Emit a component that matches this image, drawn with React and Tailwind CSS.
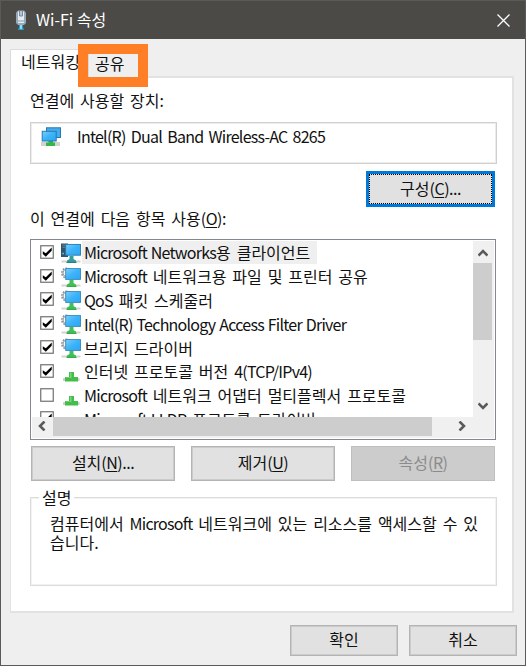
const CheckBox = ({ checked }) => (
  <svg className="mb-[2px] block h-[14px] w-[14px] shrink-0" viewBox="0 0 14 14">
    <rect x="0.75" y="0.75" width="12.5" height="12.5" fill="#fff" stroke="#707070" strokeWidth="1.2" />
    {checked && <path d="M2.8 6.2v2.8l3 2.7 5.9-6V2.6L5.8 8.3z" fill="#000" />}
  </svg>
);

const Stand = ({ blue }) => (
  <g>
    <path d="M0.5 17.500h19v2h-19z" fill="#d2d2d2" />
    <path d="M8.500 13h4v3l2.500 1.500V20h-9v-2.500L8.500 16z" fill={blue ? '#35a09a' : '#42bf58'} />
    <path d="M5.5 18.7h10V20h-10z" fill={blue ? '#287f93' : '#33b045'} />
  </g>
);

const Gradient = ({ id }) => (
  <defs>
    <linearGradient id={id} x1="0" y1="0" x2="1" y2="1">
      <stop offset="0" stopColor="#7ccdfb" />
      <stop offset="0.5" stopColor="#3bb3fa" />
      <stop offset="1" stopColor="#30a4f0" />
    </linearGradient>
  </defs>
);

const ClientIcon = () => (
  <svg className="block h-5 w-5" viewBox="0 0 20 20">
    <Gradient id="client" />
    <path d="M0 0.5h7V14H0z" fill="#34546b" />
    <path d="M1.3 2.2h3M1.3 4.3h3" stroke="#7796a8" strokeWidth="0.8" />
    <path d="M1.3 10.5h1.6" stroke="#55d4ea" strokeWidth="1.3" />
    <Stand blue />
    <rect x="4.7" y="1.4" width="14.8" height="10.8" fill="url(#client)" stroke="#2379ad" strokeWidth="0.9" />
  </svg>
);

const ServiceIcon = ({ id }) => (
  <svg className="block h-5 w-5" viewBox="0 0 20 20">
    <Gradient id={id} />
    <circle cx="5.6" cy="6" r="4.8" fill="#e6e8ea" stroke="#8d9499" strokeWidth="1.6" strokeDasharray="1.7 1.3" />
    <circle cx="5.6" cy="6" r="3.6" fill="#f7f7f7" stroke="#9aa1a6" strokeWidth="1" />
    <Stand />
    <rect x="4.7" y="1.600" width="14.8" height="10.800" fill={`url(#${id})`} stroke="#318abd" strokeWidth="0.9" />
  </svg>
);

const ProtocolIcon = () => (
  <svg className="block h-5 w-5" viewBox="0 0 20 20">
    <path d="M2 16h16.500v3H2z" fill="#d0d0d0" />
    <path d="M8 10h5v5h4v4.500H4V15h4z" fill="#45bd4b" />
    <path d="M9 10.500h1.500V16H5v-.8h4z" fill="#79d47b" />
  </svg>
);

const AdapterIcon = () => (
  <svg className="-mt-px block h-5 w-5" viewBox="0 0 20 20">
    <Gradient id="adapter" />
    <path d="M0 15h19v4H0z" fill="#d2d2d2" />
    <path d="M7.500 12h4.500v3.500h2V19H5v-3.500h2.500z" fill="#37b548" />
    <rect x="5.500" y="0.800" width="14" height="9.700" fill="#43acf0" stroke="#267bad" />
    <rect x="1.200" y="4.300" width="14" height="9.700" fill="url(#adapter)" stroke="#267bad" />
  </svg>
);

const PlugIcon = () => (
  <svg className="block h-[21px] w-3" viewBox="0 0 12 21">
    <path d="M1 2.500 3 0.500h6l2 2V13l-2 2H3l-2-2z" fill="#97a9b9" />
    <path d="M3 1.500h6V13H3z" fill="#e4ebf1" />
    <path d="M4.500 1v5h3V1" fill="#b8c5cf" stroke="#667888" strokeWidth="0.8" />
    <path d="M3 11h6" stroke="#8598aa" />
    <path d="M4 15h4v2l1 3H3l1-3z" fill="#2b9fc5" />
    <path d="M5 15h2v4H5z" fill="#8cdcf0" />
  </svg>
);

const Arrow = ({ d, className }) => (
  <svg className={className} viewBox="0 0 10 10" fill="none" stroke="#5a5a5a" strokeWidth="2.6">
    <path d={d} />
  </svg>
);

// Latin runs are set tighter than the Hangul around them.
const Text = ({ children }) =>
  children.split(/([!-~]+(?: [!-~]+)*)/).map((run, i) =>
    i % 2 ? (
      <span key={i} className="tracking-[-0.75px] [word-spacing:1px]">{run}</span>
    ) : (
      run
    ),
  );

const items = [
  { icon: <ClientIcon />, text: 'Microsoft Networks용 클라이언트', checked: true, selected: true },
  { icon: <ServiceIcon id="s1" />, text: 'Microsoft 네트워크용 파일 및 프린터 공유', checked: true },
  { icon: <ServiceIcon id="s2" />, text: 'QoS 패킷 스케줄러', checked: true },
  { icon: <ServiceIcon id="s3" />, text: 'Intel(R) Technology Access Filter Driver', checked: true },
  { icon: <ServiceIcon id="s4" />, text: '브리지 드라이버', checked: true },
  { icon: <ProtocolIcon />, text: '인터넷 프로토콜 버전 4(TCP/IPv4)', checked: true },
  { icon: <ProtocolIcon />, text: 'Microsoft 네트워크 어댑터 멀티플렉서 프로토콜', checked: false },
  { icon: <ProtocolIcon />, text: 'Microsoft LLDP 프로토콜 드라이버', checked: true },
];

const Key = ({ letter, tail = '' }) => (
  <span className="tracking-[-0.5px]">
    (<span className="underline decoration-1 underline-offset-2">{letter}</span>){tail}
  </span>
);

const Button = ({ className, children }) => (
  <button className={`flex items-center justify-center border border-[#b4b4b4] bg-[#e1e1e1] pb-[3px] shadow-[inset_0_0_0_1px_#cbcbcb] ${className}`}>{children}</button>
);

export default function App() {
  return (
    <div className="flex h-[666px] w-[526px] flex-col overflow-hidden border border-[#5a5a5a] bg-[#efefef] font-['Noto_Sans_CJK_KR',sans-serif] text-base leading-5 whitespace-nowrap text-[#111] [word-spacing:2.3px]">
      <header className="flex h-[38px] shrink-0 items-center bg-[#4b4a47] pl-[14px] text-white">
        <PlugIcon />
        <h1 className="ml-[9px] flex-1 pb-0.5 [word-spacing:0px]">Wi-Fi 속성</h1>
        <svg className="mr-[15px] h-[13px] w-[13px]" viewBox="0 0 13 13" stroke="#fff" strokeWidth="1.300">
          <path d="m.5.500 12 12M12.500.500l-12 12" />
        </svg>
      </header>

      <nav className="relative z-10 ml-[9px] mt-[10px] flex h-[28px] shrink-0">
        <div className="h-[30px] w-[69px] border-t border-l border-[#dcdcdc] bg-white pt-px pl-[10px]">네트워킹</div>
        <div className="-mt-[5px] -ml-px h-[43px] w-[70px] border-10 border-[#ff7f27] bg-[#efefef]">
          <div className="h-[23px] border-l border-[#d9d9d9] pl-[6px] leading-[18px]">공유</div>
        </div>
      </nav>

      <main className="-mt-px ml-[9px] flex h-[537px] w-[504px] shrink-0 flex-col border-2 border-l border-[#e2e2e2] bg-white pl-[19px]">
        <div className="mt-[12px] h-5 shrink-0">연결에 사용할 장치:</div>
        <div className="mt-[12px] flex h-[42px] w-[467px] shrink-0 border border-[#d0d0d0] pt-[5px] pl-[10px] shadow-[inset_0_0_0_1px_#ececec]">
          <AdapterIcon />
          <span className="-mt-[2px] ml-4 tracking-[-0.75px]">Intel(R) Dual Band Wireless-AC 8265</span>
        </div>
        <button className="mt-[7px] ml-[336px] flex h-9 w-[129px] shrink-0 border-3 border-[#0078d7] bg-[#0078d7]">
          <span className="flex h-full w-full items-center justify-center border border-dotted border-black bg-[#e1e1e1] pb-0.5">
            구성<Key letter="C" tail="..." />
          </span>
        </button>
        <div className="mt-[1px] h-5 shrink-0">이 연결에 다음 항목 사용<Key letter="O" tail=":" /></div>

        <section className="mt-[11px] flex h-[201px] w-[466px] shrink-0 flex-col border border-[#828790] p-px">
          <div className="flex h-[176px] shrink-0">
            <ul className="h-[176px] flex-1 overflow-hidden">
              {items.map((item) => (
                <li key={item.text} className="flex h-[23.800px] items-center pl-[8px]">
                  <CheckBox checked={item.checked} />
                  <span className="ml-[7px] shrink-0">{item.icon}</span>
                  <span className={`ml-px h-[23px] pt-px pr-[7px] pl-[2px] ${item.selected ? 'bg-[#efefef]' : ''}`}>
                    <Text>{item.text}</Text>
                  </span>
                </li>
              ))}
            </ul>
            <div className="flex w-[21px] shrink-0 flex-col bg-[#f0f0f0]">
              <Arrow className="mt-[7px] ml-[5px] h-[10px] w-[10px]" d="M.5 7.500 5 3l4.500 4.500" />
              <div className="mt-[5px] h-[77px] w-[19px] bg-[#cdcdcd]" />
              <Arrow className="mt-[61px] ml-[5px] h-[10px] w-[10px]" d="M.5 2.500 5 7l4.500-4.500" />
            </div>
          </div>
          <div className="flex h-[21px] bg-[#f0f0f0]">
            <Arrow className="mt-[4px] ml-[5px] h-[10px] w-[10px]" d="M7.500.500 3 5l4.500 4.500" />
            <div className="ml-[6px] h-[19px] w-[379px] bg-[#cdcdcd]" />
            <Arrow className="mt-[4px] ml-[25px] h-[10px] w-[10px]" d="M2.500.500 7 5 2.500 9.500" />
          </div>
        </section>

        <div className="mt-[6px] ml-px flex h-[35px] shrink-0 gap-4">
          <Button className="w-[144px]">설치<Key letter="N" tail="..." /></Button>
          <Button className="w-[144px]">제거<Key letter="U" /></Button>
          <button className="flex w-[144px] items-center justify-center border border-[#bfbfbf] bg-[#cccccc] pb-[3px] text-[#8b8b8b]">
            속성<Key letter="R" />
          </button>
        </div>

        <section className="mt-[16px] h-[89px] w-[467px] shrink-0 border border-[#dcdcdc] shadow-[inset_0_0_0_1px_#f2f2f2]">
          <h2 className="-mt-[11px] ml-[8px] w-[35px] bg-white pl-[3px]">설명</h2>
          <p className="mt-[7px] ml-[19px] leading-[19px]">
            <Text>컴퓨터에서 Microsoft 네트워크에 있는 리소스를 액세스할 수 있</Text>
            <br />
            습니다.
          </p>
        </section>
      </main>

      <footer className="mt-[12px] ml-[289px] flex gap-[11px]">
        <Button className="h-[31px] w-[108px]">확인</Button>
        <Button className="h-[31px] w-[108px]">취소</Button>
      </footer>
    </div>
  );
}
